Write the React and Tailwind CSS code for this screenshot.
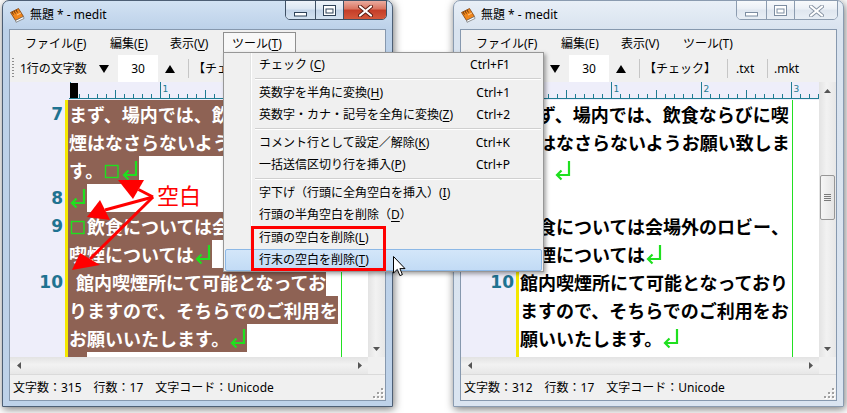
import React from "react";

const UI = "font-['Noto_Sans','Noto_Sans_CJK_JP',sans-serif]";
const JP = "font-['Noto_Sans_CJK_JP',sans-serif]";
const GREEN = "#1fe01f";
const TEAL = "#1f7c93";

const RET = { k: "ret" };
const SP = { k: "sp" };
const HSP = { k: "hsp" };
const EMP = { k: "emp" };

function RetMark() {
  return (
    <svg width="18" height="28" viewBox="0 0 18 28" className="block shrink-0">
      <path d="M15 5 V19 H3" fill="none" stroke={GREEN} strokeWidth="2.2" />
      <path d="M7.5 14.5 L3 19 L7.5 23.5" fill="none" stroke={GREEN} strokeWidth="2.2" />
    </svg>
  );
}

function SpMark() {
  return (
    <svg width="18" height="28" viewBox="0 0 18 28" className="block shrink-0">
      <rect x="2.5" y="9.5" width="12.5" height="12" fill="none" stroke={GREEN} strokeWidth="1.4" />
    </svg>
  );
}

function Row({ tokens, sel }) {
  return (
    <div className="flex h-[28px]">
      <div
        className={
          sel
            ? "flex h-full items-center bg-[#8e6254] pl-px text-white"
            : "flex h-full items-center pl-px text-black"
        }
      >
        {tokens.map((t, i) => {
          if (typeof t === "string")
            return (
              <span key={i} className="whitespace-nowrap">
                {t}
              </span>
            );
          if (t.k === "ret") return <RetMark key={i} />;
          if (t.k === "sp") return <SpMark key={i} />;
          if (t.k === "hsp") return <span key={i} className="inline-block w-[7px]" />;
          return <span key={i} className="inline-block h-full w-[18px]" />;
        })}
      </div>
    </div>
  );
}

function Ruler() {
  const ticks = [];
  for (let k = 0; k <= 33; k++) {
    const x = 1 + 9 * k + 0.5;
    let y1 = 12;
    if (k % 10 === 0) y1 = 0;
    else if (k % 5 === 0) y1 = 8;
    ticks.push(<line key={k} x1={x} x2={x} y1={y1} y2={17} stroke={TEAL} strokeWidth="1" />);
    if (k % 10 === 0 && k > 0)
      ticks.push(
        <text key={"t" + k} x={x + 2} y={10} fontSize="9" fill={TEAL} fontFamily="DejaVu Sans">
          {k / 10}
        </text>
      );
  }
  return (
    <svg width="299" height="18" className="block">
      <rect width="299" height="18" fill="#eeeefa" />
      {ticks}
      <rect x="1" y="1" width="8" height="15.5" fill="#000" />
      <line x1="0" x2="299" y1="16.5" y2="16.5" stroke={TEAL} strokeWidth="1" />
    </svg>
  );
}

function Tri({ dir, size = "big" }) {
  const big = size === "big";
  const w = big ? 10 : 7;
  const h = big ? 8 : 4;
  const fill = big ? "#000" : "#555";
  if (dir === "down")
    return (
      <svg width={w} height={h} className="block">
        <polygon points={`0,0 ${w},0 ${w / 2},${h}`} fill={fill} />
      </svg>
    );
  if (dir === "up")
    return (
      <svg width={w} height={h} className="block">
        <polygon points={`0,${h} ${w},${h} ${w / 2},0`} fill={fill} />
      </svg>
    );
  if (dir === "left")
    return (
      <svg width={h} height={w} className="block">
        <polygon points={`${h},0 ${h},${w} 0,${w / 2}`} fill={fill} />
      </svg>
    );
  return (
    <svg width={h} height={w} className="block">
      <polygon points={`0,0 0,${w} ${h},${w / 2}`} fill={fill} />
    </svg>
  );
}

function AppIcon() {
  return (
    <svg width="16" height="16" viewBox="0 0 16 16" className="block">
      <path d="M1.5 5.5 L9.5 1.5 L14.5 9.5 L6.5 13.5 Z" fill="#f0861c" stroke="#7a3e0c" strokeWidth="0.8" />
      <path d="M6.5 13.5 L14.5 9.5 L15 11.5 L7 15.3 Z" fill="#ffffff" stroke="#6b6b6b" strokeWidth="0.7" />
      <path d="M3 5 L4.5 7.5 M5 4 L6.5 6.5 M7 3 L8.5 5.5" stroke="#5a2c06" strokeWidth="0.9" />
      <path d="M8 8 L12 6" stroke="#ffd9a8" strokeWidth="0.8" />
    </svg>
  );
}

function Caption({ active }) {
  const glyph = active ? "#2f4258" : "#7d8da1";
  return (
    <div
      className={
        active
          ? "-mt-px ml-auto mr-[5px] flex h-[20px] self-start overflow-hidden rounded-b-[5px] border border-[#3f5064]"
          : "-mt-px ml-auto mr-[5px] flex h-[20px] self-start overflow-hidden rounded-b-[5px] border border-[#8c9cb0]"
      }
    >
      <div
        className={
          active
            ? "flex w-[29px] justify-center bg-[linear-gradient(180deg,#eef3f9_0%,#dbe6f2_45%,#c3d4e8_50%,#d4e2f1_100%)] pt-[11px]"
            : "flex w-[29px] justify-center bg-[linear-gradient(180deg,#f8fafc_0%,#ebf0f6_45%,#dfe6ef_50%,#e8eef5_100%)] pt-[11px]"
        }
      >
        <svg width="13" height="5" className="block">
          <rect x="0.5" y="0.5" width="12" height="3.5" fill="#fff" stroke={glyph} />
        </svg>
      </div>
      <div
        className={
          active
            ? "flex w-[28px] justify-center border-l border-[#3f5064] bg-[linear-gradient(180deg,#eef3f9_0%,#dbe6f2_45%,#c3d4e8_50%,#d4e2f1_100%)] pt-[4px]"
            : "flex w-[28px] justify-center border-l border-[#8c9cb0] bg-[linear-gradient(180deg,#f8fafc_0%,#ebf0f6_45%,#dfe6ef_50%,#e8eef5_100%)] pt-[4px]"
        }
      >
        <svg width="13" height="11" className="block">
          <rect x="0.5" y="0.5" width="12" height="10" fill="#fff" stroke={glyph} />
          <rect x="3" y="4" width="7" height="4" fill="none" stroke={glyph} />
        </svg>
      </div>
      <div
        className={
          active
            ? "flex w-[43px] justify-center border-l border-[#3f5064] bg-[linear-gradient(180deg,#eaab9f_0%,#d9735f_45%,#c43d28_50%,#d4583c_100%)] pt-[4px]"
            : "flex w-[43px] justify-center border-l border-[#8c9cb0] bg-[linear-gradient(180deg,#f8fafc_0%,#ebf0f6_45%,#dfe6ef_50%,#e8eef5_100%)] pt-[4px]"
        }
      >
        <svg width="15" height="12" viewBox="0 0 15 12" className="block">
          <path d="M2 1.5 L13 10.5 M13 1.5 L2 10.5" stroke={active ? "#5a1c12" : "#8894a4"} strokeWidth="4" strokeLinecap="round" />
          <path d="M2 1.5 L13 10.5 M13 1.5 L2 10.5" stroke="#fff" strokeWidth="2.2" strokeLinecap="round" />
        </svg>
      </div>
    </div>
  );
}

function MenuLabel({ parts, cue }) {
  return (
    <>
      {parts[0]}
      <span className={cue ? "underline underline-offset-2" : ""}>{parts[1]}</span>
      {parts[2]}
    </>
  );
}

function Menubar({ active }) {
  return (
    <div className="flex h-[25px] items-end pl-[6px] text-[12px] text-black">
      <div className="flex h-[23px] w-[85px] items-center pl-[9px]">
        <MenuLabel parts={["ファイル(", "F", ")"]} cue={active} />
      </div>
      <div className="flex h-[23px] w-[60px] items-center pl-[9px]">
        <MenuLabel parts={["編集(", "E", ")"]} cue={active} />
      </div>
      <div className="flex h-[23px] w-[62px] items-center pl-[9px]">
        <MenuLabel parts={["表示(", "V", ")"]} cue={active} />
      </div>
      {active ? (
        <div className="flex h-[23px] w-[73px] items-center border border-b-0 border-[#8f8f8f] bg-[#f8f8f8] pl-[8px]">
          <MenuLabel parts={["ツール(", "T", ")"]} cue={active} />
        </div>
      ) : (
        <div className="flex h-[23px] w-[73px] items-center pl-[9px]">
          <MenuLabel parts={["ツール(", "T", ")"]} cue={false} />
        </div>
      )}
    </div>
  );
}

function Toolbar() {
  return (
    <div className="flex h-[27px] items-center text-[12px] text-black">
      <div className="ml-[2px] h-[21px] w-[2px] bg-[repeating-linear-gradient(to_bottom,#8c8c8c_0px,#8c8c8c_1px,transparent_1px,transparent_3px)]" />
      <div className="ml-[6px] w-[74px] whitespace-nowrap">1行の文字数</div>
      <div className="flex w-[20px] justify-center">
        <Tri dir="down" />
      </div>
      <div className="ml-[4px] flex w-[40px] items-center justify-center self-stretch bg-white">30</div>
      <div className="flex w-[24px] justify-center">
        <Tri dir="up" />
      </div>
      <div className="ml-[6px] h-[19px] w-px bg-[#c6c6c6]" />
      <div className="ml-[4px] w-[83px] whitespace-nowrap">【チェック】</div>
      <div className="h-[19px] w-px bg-[#c6c6c6]" />
      <div className="ml-[8px] w-[31px]">.txt</div>
      <div className="h-[19px] w-px bg-[#c6c6c6]" />
      <div className="ml-[6px]">.mkt</div>
    </div>
  );
}

function VScroll() {
  return (
    <div className="flex w-[17px] flex-col bg-[linear-gradient(to_right,#e3e3e3,#f2f2f2_45%,#e7e7e7)]">
      <div className="flex h-[17px] items-center justify-center">
        <Tri dir="up" size="small" />
      </div>
      <div className="flex-1">
        <div className="mx-auto mt-[76px] flex h-[45px] w-[15px] flex-col items-center justify-center gap-[1px] rounded-[2px] border border-[#979797] bg-[linear-gradient(to_right,#f6f6f6,#e4e4e4)]">
          <div className="h-px w-[7px] bg-[#7a7a7a]" />
          <div className="h-px w-[7px] bg-[#7a7a7a]" />
          <div className="h-px w-[7px] bg-[#7a7a7a]" />
          <div className="h-px w-[7px] bg-[#7a7a7a]" />
        </div>
      </div>
      <div className="flex h-[17px] items-center justify-center">
        <Tri dir="down" size="small" />
      </div>
    </div>
  );
}

function HScroll() {
  return (
    <div className="flex h-[17px]">
      <div className="flex flex-1 bg-[linear-gradient(to_bottom,#e3e3e3,#f2f2f2_45%,#e7e7e7)]">
        <div className="flex w-[17px] items-center justify-center">
          <Tri dir="left" size="small" />
        </div>
        <div className="flex-1" />
        <div className="flex w-[17px] items-center justify-center">
          <Tri dir="right" size="small" />
        </div>
      </div>
      <div className="w-[17px] bg-[#f0f0f0]" />
    </div>
  );
}

function Grip() {
  const dots = [
    [9, 1],
    [9, 5],
    [5, 5],
    [9, 9],
    [5, 9],
    [1, 9],
  ];
  return (
    <svg width="12" height="12" className="mb-[1px] ml-auto mr-[1px] block self-end">
      {dots.map(([x, y], i) => (
        <g key={i}>
          <rect x={x + 1} y={y + 1} width="2" height="2" fill="#fff" />
          <rect x={x} y={y} width="2" height="2" fill="#a0a0a0" />
        </g>
      ))}
    </svg>
  );
}

function Win({ pos, active, rows, nums, status }) {
  return (
    <div
      className={
        (active
          ? "border-[#4d5f75] bg-[linear-gradient(180deg,#d2e2f3_0px,#bcd1e9_28px,#bed2e9_100%)] "
          : "border-[#8a9bb0] bg-[linear-gradient(180deg,#e8eff7_0px,#d9e3ef_28px,#dae4f0_100%)] ") +
        "absolute top-0 flex h-[407px] w-[391px] flex-col rounded-t-[7px] border shadow-[1px_2px_9px_rgba(0,0,0,0.55)] " +
        pos
      }
    >
      <div className="flex h-[28px] items-center">
        <div className="ml-[6px]">
          <AppIcon />
        </div>
        <div className="ml-[5px] text-[12px] text-black">無題 * - medit</div>
        <Caption active={active} />
      </div>
      <div className="mx-[6px] flex h-[372px] flex-col border border-[#8698ae] bg-[#f0f0f0]">
        <Menubar active={active} />
        <Toolbar />
        <div className="flex h-[275px]">
          <div className="flex w-[358px] flex-col">
            <div className="flex h-[18px]">
              <div className="w-[59px] bg-[#eeeefa]" />
              <Ruler />
            </div>
            <div className="flex h-[257px]">
              <div className="w-[55px] bg-[#eeeefa] pr-[2px] text-right font-['DejaVu_Sans',sans-serif] text-[17px] font-bold leading-[28px] text-[#1f7391]">
                {nums.map((n, i) => (
                  <div key={i} className="h-[28px]">
                    {n}
                  </div>
                ))}
              </div>
              <div className="w-[3px] bg-[#f4e800]" />
              <div className={"relative w-[300px] overflow-hidden bg-white text-[18px] font-bold leading-[28px] " + JP}>
                {rows.map((r, i) => (
                  <Row key={i} tokens={r.t} sel={r.s} />
                ))}
                <div className="absolute left-[273px] top-0 h-full w-px bg-[#22e022]" />
              </div>
            </div>
          </div>
          <VScroll />
        </div>
        <HScroll />
        <div className="flex h-[26px] items-center border-t border-[#dadada] pl-[3px] text-[12px] text-black">
          <span className="whitespace-nowrap">{status}</span>
          <Grip />
        </div>
      </div>
    </div>
  );
}

const NUMS = ["7", "", "", "8", "9", "", "10", "", "", ""];

const LEFT_ROWS = [
  { t: ["まず、場内では、飲食ならびに喫"], s: true },
  { t: ["煙はなさらないようお願い致しま"], s: true },
  { t: ["す。", SP, RET], s: true },
  { t: [RET], s: true },
  { t: [SP, "飲食については会場外のロビー、"], s: true },
  { t: ["喫煙については", RET], s: true },
  { t: [HSP, "館内喫煙所にて可能となってお"], s: true },
  { t: ["りますので、そちらでのご利用を"], s: true },
  { t: ["お願いいたします。", RET], s: true },
  { t: [EMP], s: true },
];

const RIGHT_ROWS = [
  { t: ["まず、場内では、飲食ならびに喫"], s: false },
  { t: ["煙はなさらないようお願い致しま"], s: false },
  { t: ["す。", RET], s: false },
  { t: [RET], s: false },
  { t: ["飲食については会場外のロビー、"], s: false },
  { t: ["喫煙については", RET], s: false },
  { t: ["館内喫煙所にて可能となっており"], s: false },
  { t: ["ますので、そちらでのご利用をお"], s: false },
  { t: ["願いいたします。", RET], s: false },
  { t: [RET], s: false },
];

const MENU = [
  { l: ["チェック (", "C", ")"], s: "Ctrl+F1" },
  "sep",
  { l: ["英数字を半角に変換(", "H", ")"], s: "Ctrl+1" },
  { l: ["英数字・カナ・記号を全角に変換(", "Z", ")"], s: "Ctrl+2" },
  "sep",
  { l: ["コメント行として設定／解除(", "K", ")"], s: "Ctrl+K" },
  { l: ["一括送信区切り行を挿入(", "P", ")"], s: "Ctrl+P" },
  "sep",
  { l: ["字下げ（行頭に全角空白を挿入）(", "I", ")"] },
  { l: ["行頭の半角空白を削除（", "D", "）"] },
  { l: ["行頭の空白を削除(", "L", ")"], tall: true },
  { l: ["行末の空白を削除(", "T", ")"], hl: true },
];

function Dropdown() {
  return (
    <div className="absolute left-[223px] top-[52px] h-[220px] w-[321px] border border-[#979797] bg-[linear-gradient(to_right,#f0f0f0_26px,#e2e3e3_26px,#e2e3e3_27px,#ffffff_27px,#ffffff_28px,#f0f0f0_28px)] pt-px text-[12px] text-black shadow-[2px_2px_4px_rgba(0,0,0,0.35)]">
      {MENU.map((m, i) => {
        if (m === "sep")
          return (
            <div key={i} className="flex h-[6px] flex-col justify-center">
              <div className="ml-[31px] mr-[2px] h-px bg-[#d0d0d0]" />
              <div className="ml-[31px] mr-[2px] h-px bg-white" />
            </div>
          );
        if (m.hl)
          return (
            <div
              key={i}
              className="mx-px flex h-[22px] items-center rounded-[2px] border border-[#8cb8e6] bg-[linear-gradient(180deg,#d3e6f9,#c2dbf5)] pl-[33px] pr-[32px]"
            >
              <span className="flex-1 whitespace-nowrap">
                <MenuLabel parts={m.l} cue />
              </span>
            </div>
          );
        return (
          <div key={i} className={(m.tall ? "h-[23px] " : "h-[22px] ") + "flex items-center pl-[35px] pr-[33px]"}>
            <span className="flex-1 whitespace-nowrap">
              <MenuLabel parts={m.l} cue />
            </span>
            {m.s ? <span className="whitespace-nowrap">{m.s}</span> : null}
          </div>
        );
      })}
    </div>
  );
}

function Annotation() {
  const R = "#ff0000";
  return (
    <>
      <svg className="pointer-events-none absolute left-0 top-0" width="847" height="413">
        <line x1="153" y1="197" x2="138.5" y2="189.5" stroke={R} strokeWidth="3" />
        <polygon points="118,180 144,180 133,199" fill={R} />
        <line x1="153" y1="197" x2="105" y2="210" stroke={R} strokeWidth="3" />
        <polygon points="87,217 100,200 110,220" fill={R} />
        <line x1="153" y1="197" x2="90" y2="259" stroke={R} strokeWidth="3" />
        <polygon points="72,270 80,253 100,265" fill={R} />
      </svg>
      <div className={"pointer-events-none absolute left-[157px] top-[183px] text-[22px] leading-none text-[#ff0000] " + JP}>
        空白
      </div>
    </>
  );
}

export default function App() {
  return (
    <div className={"relative h-[413px] w-[847px] overflow-hidden bg-white " + UI}>
      <Win
        pos="left-[2px]"
        active
        rows={LEFT_ROWS}
        nums={NUMS}
        status="文字数：315　行数：17　文字コード：Unicode"
      />
      <Win
        pos="left-[453px]"
        active={false}
        rows={RIGHT_ROWS}
        nums={NUMS}
        status="文字数：312　行数：17　文字コード：Unicode"
      />
      <Dropdown />
      <div className="pointer-events-none absolute left-[251px] top-[226px] h-[45px] w-[135px] border-[3px] border-[#ff0000]" />
      <Annotation />
      <svg className="pointer-events-none absolute left-[393px] top-[256px]" width="13" height="21" viewBox="0 0 13 21">
        <path d="M0.5 0.5 V17 L4.3 13.4 L6.9 19.6 L9.4 18.6 L6.9 12.6 L12 12.6 Z" fill="#fff" stroke="#000" strokeWidth="1" />
      </svg>
    </div>
  );
}
